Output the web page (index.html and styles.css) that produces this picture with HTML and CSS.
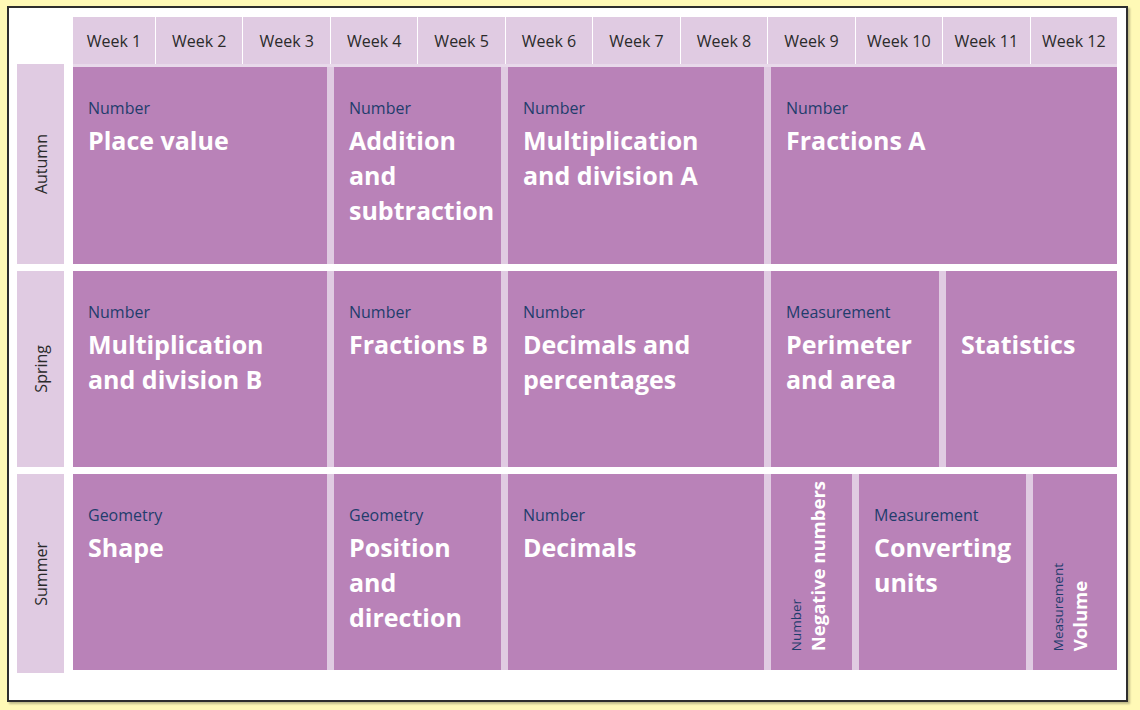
FILE: index.html
```html
<!DOCTYPE html>
<html lang="en">
<head>
<meta charset="utf-8">
<title>Year overview</title>
<link rel="stylesheet" href="styles.css">
</head>
<body>
<div class="panel">
  <div class="head">
    <div class="corner"></div>
    <div class="weeks">
      <div class="week">Week 1</div>
      <div class="week">Week 2</div>
      <div class="week">Week 3</div>
      <div class="week">Week 4</div>
      <div class="week">Week 5</div>
      <div class="week">Week 6</div>
      <div class="week">Week 7</div>
      <div class="week">Week 8</div>
      <div class="week">Week 9</div>
      <div class="week">Week 10</div>
      <div class="week">Week 11</div>
      <div class="week">Week 12</div>
    </div>
  </div>

  <div class="term first">
    <div class="season"><span>Autumn</span></div>
    <div class="blocks">
      <div class="card s3"><div class="cat">Number</div><div class="title">Place value</div></div>
      <div class="card s2"><div class="cat">Number</div><div class="title">Addition<br>and<br>subtraction</div></div>
      <div class="card s3"><div class="cat">Number</div><div class="title">Multiplication<br>and division A</div></div>
      <div class="card s4"><div class="cat">Number</div><div class="title">Fractions A</div></div>
    </div>
  </div>

  <div class="term">
    <div class="season"><span>Spring</span></div>
    <div class="blocks">
      <div class="card s3"><div class="cat">Number</div><div class="title">Multiplication<br>and division B</div></div>
      <div class="card s2"><div class="cat">Number</div><div class="title">Fractions B</div></div>
      <div class="card s3"><div class="cat">Number</div><div class="title">Decimals and<br>percentages</div></div>
      <div class="card s2"><div class="cat">Measurement</div><div class="title">Perimeter<br>and area</div></div>
      <div class="card s2"><div class="title nocat">Statistics</div></div>
    </div>
  </div>

  <div class="term last">
    <div class="season"><span>Summer</span></div>
    <div class="blocks">
      <div class="card s3"><div class="cat">Geometry</div><div class="title">Shape</div></div>
      <div class="card s2"><div class="cat">Geometry</div><div class="title">Position<br>and<br>direction</div></div>
      <div class="card s3"><div class="cat">Number</div><div class="title">Decimals</div></div>
      <div class="card s1 vert"><div class="vtext"><div class="vcat">Number</div><div class="vtitle">Negative numbers</div></div></div>
      <div class="card s2"><div class="cat">Measurement</div><div class="title">Converting<br>units</div></div>
      <div class="card s1 vert"><div class="vtext"><div class="vcat">Measurement</div><div class="vtitle">Volume</div></div></div>
    </div>
  </div>
</div>
</body>
</html>
```

FILE: styles.css
```css
html, body {
  margin: 0;
  padding: 0;
  background: #fff9b6;
}

body {
  width: 1140px;
  height: 710px;
  overflow: hidden;
  font-family: "Open Sans", "Noto Sans", sans-serif;
}

.panel {
  box-sizing: border-box;
  width: 1121px;
  height: 696px;
  margin: 6px 0 0 7px;
  padding: 9px 0 0 8px;
  background: #ffffff;
  border: 2px solid #2e2e2e;
  box-shadow: 2px 2px 2px rgba(0, 0, 0, 0.25);
}

.head {
  display: flex;
  gap: 9px;
}

.corner {
  width: 47px;
}

.weeks {
  width: 1044px;
  display: grid;
  grid-template-columns: 82px repeat(11, 1fr);
  column-gap: 1px;
  background: #ffffff;
  border-bottom: 3px solid #e8d9ea;
}

.week {
  height: 47px;
  background: #e0cbe2;
  display: flex;
  align-items: center;
  justify-content: center;
  font-size: 16px;
  color: #2a2a2a;
}

.term {
  display: flex;
  gap: 9px;
  height: 196px;
  margin-top: 7px;
}

.term.first {
  height: 197px;
  margin-top: 0;
}

.season {
  width: 47px;
  background: #e0cbe2;
  display: flex;
  align-items: center;
  justify-content: center;
}

.term.first .season {
  margin-top: -3px;
}

.term.last .season {
  margin-bottom: -3px;
}

.season span {
  writing-mode: vertical-rl;
  transform: rotate(180deg);
  font-size: 16px;
  color: #2a2a2a;
}

.blocks {
  width: 1044px;
  display: grid;
  grid-template-columns: 80px 80px 80px 80px 80px 81px 81px 80px 81px 80px 80px 84px;
  column-gap: 7px;
  background: #e0cbe2;
}

.card {
  background: #b982b8;
  padding: 30px 15px 0 15px;
  min-width: 0;
}

.s1 { grid-column: span 1; }
.s2 { grid-column: span 2; }
.s3 { grid-column: span 3; }
.s4 { grid-column: span 4; }

.cat {
  font-size: 16px;
  line-height: 22px;
  color: #1f3d6c;
}

.title {
  margin-top: 4px;
  font-size: 25px;
  line-height: 35px;
  font-weight: 700;
  color: #ffffff;
  white-space: nowrap;
}

.title.nocat {
  margin-top: 26px;
}

.card.vert {
  display: flex;
  align-items: flex-end;
  padding: 0 0 19px 16px;
}

.vtext {
  writing-mode: vertical-rl;
  transform: rotate(180deg);
  white-space: nowrap;
}

.vcat {
  font-size: 13.5px;
  line-height: 18px;
  color: #1f3d6c;
}

.vtitle {
  font-size: 18.5px;
  line-height: 26px;
  font-weight: 700;
  color: #ffffff;
}
```
